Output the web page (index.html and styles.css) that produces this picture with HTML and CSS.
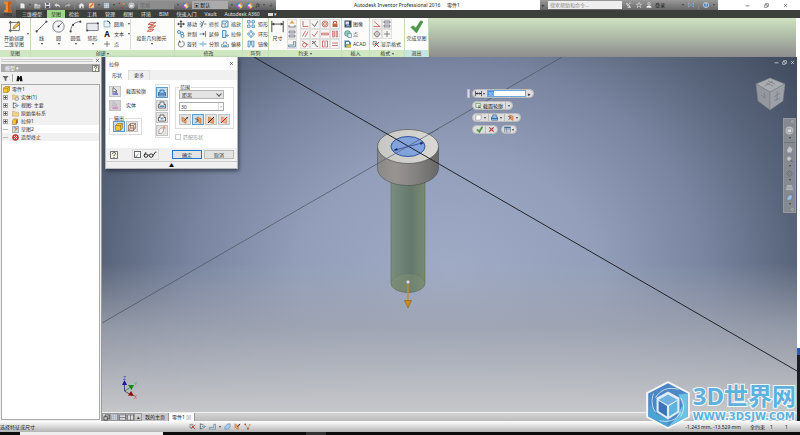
FILE: index.html
```html
<!DOCTYPE html>
<html lang="zh-CN">
<head>
  <meta charset="UTF-8" />
  <title>Autodesk Inventor Professional 2016</title>
  <link rel="stylesheet" href="styles.css">
</head>
<body>

  <!-- icon set, 16 x 16 grid -->
  <svg class="sprite" aria-hidden="true">
    <symbol id="i-new" viewBox="0 0 16 16"><path d="M3 3h7l3 3v8H3z" fill="#eee" stroke="#999"/></symbol>
    <symbol id="i-open" viewBox="0 0 16 16"><path d="M1 4h5l2 2h6v8H1z" fill="#d8d8d8"/><path d="M4 8h12l-3 6H1z" fill="#aaa"/></symbol>
    <symbol id="i-save" viewBox="0 0 16 16"><path d="M2 2h12v12H2z" fill="#dde"/><path d="M5 2h6v4H5zM4 9h8v5H4z" fill="#556"/></symbol>
    <symbol id="i-undo" viewBox="0 0 16 16"><path d="M1 7l5-5v3c6 0 8 3 8 8-2-4-4-4-8-4v3z" fill="#ddd"/></symbol>
    <symbol id="i-redo" viewBox="0 0 16 16"><path d="M15 7l-5-5v3c-6 0-8 3-8 8 2-4 4-4 8-4v3z" fill="#aaa"/></symbol>
    <symbol id="i-home" viewBox="0 0 16 16"><path d="M1 8l7-6 7 6h-2v6H3V8z" fill="#e8e8e8"/><path d="M7 10h3v4H7z" fill="#555"/></symbol>
    <symbol id="i-pencil" viewBox="0 0 16 16"><path d="M2 2h12v12H2z" fill="#f0d8a8" stroke="#a66"/><path d="M4 12l8-8" stroke="#d62" stroke-width="3"/></symbol>
    <symbol id="i-ball" viewBox="0 0 16 16"><circle cx="8" cy="8" r="7" fill="#48c"/><path d="M8 8V1a7 7 0 0 1 7 7z" fill="#e84"/><path d="M8 8h7a7 7 0 0 1-7 7z" fill="#ec4"/><path d="M8 8v7a7 7 0 0 1-7-7z" fill="#b4c"/><circle cx="8" cy="8" r="3" fill="#eee"/></symbol>
    <symbol id="i-grid" viewBox="0 0 16 16"><path d="M2 2h12v12H2z" fill="#e6eef2" stroke="#678"/><path d="M2 6h12M2 10h12M6 2v12M10 2v12" stroke="#89a"/></symbol>
    <symbol id="i-pick" viewBox="0 0 16 16"><path d="M4 1v10l3-3 2 4 2-1-2-3h3z" fill="#fff" stroke="#223" stroke-width="1.2"/><path d="M3 14h11" stroke="#22c" stroke-width="2"/></symbol>
    <symbol id="i-pick-off" viewBox="0 0 16 16"><path d="M4 1v10l3-3 2 4 2-1-2-3h3z" fill="#ccc" stroke="#aaa"/><path d="M3 14h11" stroke="#c6b" stroke-width="2"/></symbol>
    <symbol id="i-sketch" viewBox="0 0 16 16"><path d="M3 1v14M1 3h13v10H1" fill="none" stroke="#555"/><circle cx="3" cy="3" r="1.5" fill="#666"/><circle cx="13" cy="3" r="1.5" fill="#666"/><circle cx="3" cy="13" r="1.5" fill="#666"/><path d="M6 11l1-3 6-5 2 2-6 5z" fill="#eb4" stroke="#754" stroke-width=".7"/></symbol>
    <symbol id="i-line" viewBox="0 0 16 16"><path d="M2 14L14 2" stroke="#555"/><circle cx="2" cy="14" r="1.3" fill="#444"/><circle cx="14" cy="2" r="1.3" fill="#444"/></symbol>
    <symbol id="i-circle" viewBox="0 0 16 16"><circle cx="8" cy="8" r="7" fill="#f2f4f5" stroke="#667"/><path d="M8 8l4-4" stroke="#667"/><circle cx="8" cy="8" r="1.2" fill="#333"/></symbol>
    <symbol id="i-arc" viewBox="0 0 16 16"><path d="M2 14C2 6 8 2 14 2" fill="none" stroke="#555"/><circle cx="2" cy="14" r="1.3" fill="#444"/><circle cx="14" cy="2" r="1.3" fill="#444"/><circle cx="5" cy="6" r="1.3" fill="#444"/></symbol>
    <symbol id="i-rect" viewBox="0 0 16 16"><path d="M1 4h14v9H1z" fill="#e6eaec" stroke="#667"/><circle cx="1.5" cy="13" r="1.3" fill="#444"/><circle cx="14.5" cy="4" r="1.3" fill="#444"/></symbol>
    <symbol id="i-fillet" viewBox="0 0 16 16"><path d="M2 2h6q6 0 6 6v6H2z" fill="#e8f0f6" stroke="#478"/><path d="M8 2q6 0 6 6" fill="none" stroke="#16a" stroke-width="2"/></symbol>
    <symbol id="i-point" viewBox="0 0 16 16"><path d="M8 2v12M2 8h12" stroke="#555" stroke-width="1.4"/></symbol>
    <symbol id="i-project" viewBox="0 0 16 16"><path d="M3 5l4-3h7l-4 3zM3 10l4-3h7l-4 3zM2 15l3-3h6l-3 3z" fill="#fbd8d0" stroke="#b43" stroke-width="1.2"/><path d="M10 5L6 9" stroke="#b43"/></symbol>
    <symbol id="i-move" viewBox="0 0 16 16"><path d="M8 0l3 4H9v3h3V5l4 3-4 3V9H9v3h2l-3 4-3-4h2V9H4v2L0 8l4-3v2h3V4H5z" fill="#444"/></symbol>
    <symbol id="i-copy" viewBox="0 0 16 16"><g fill="#fff" stroke="#27a" stroke-width="1.6"><circle cx="4" cy="4" r="3"/><circle cx="10" cy="7" r="3"/><circle cx="11" cy="12" r="3"/></g></symbol>
    <symbol id="i-rotate" viewBox="0 0 16 16"><path d="M10 2a6 6 0 1 1-5 1" fill="none" stroke="#555" stroke-width="1.6"/><path d="M4 0v5h5z" fill="#555"/></symbol>
    <symbol id="i-trim" viewBox="0 0 16 16"><path d="M1 8h5M10 8h5M10 1L5 15" stroke="#555" stroke-width="1.4"/><path d="M3 3l5 4M3 13l5-4" stroke="#27a" stroke-width="1.8"/></symbol>
    <symbol id="i-extend" viewBox="0 0 16 16"><path d="M1 8h9M13 2v12" stroke="#27a" stroke-width="1.6"/><path d="M8 5l4 3-4 3z" fill="#555"/></symbol>
    <symbol id="i-split" viewBox="0 0 16 16"><path d="M1 8h5M10 8h5M8 3v10" stroke="#27a" stroke-width="1.5"/></symbol>
    <symbol id="i-scale" viewBox="0 0 16 16"><path d="M2 2h12v12H2z" fill="#d6e8f4" stroke="#27a" stroke-width="1.5"/><path d="M2 8h6v6H2zM8 8l4-4" fill="#fff" stroke="#456"/></symbol>
    <symbol id="i-stretch" viewBox="0 0 16 16"><path d="M3 1h7v14H3z" fill="#d6e8f4" stroke="#27a" stroke-width="1.5"/><path d="M8 11h7M12 8l3 3-3 3" fill="none" stroke="#456"/></symbol>
    <symbol id="i-offset" viewBox="0 0 16 16"><path d="M1 14V9l4-1V4h6v4l4 1v5z" fill="#dfe9f0" stroke="#467"/><path d="M4 12h8" stroke="#27a" stroke-width="2"/></symbol>
    <symbol id="i-pat" viewBox="0 0 16 16"><path d="M4 4h8v8H4z" fill="none" stroke="#89a"/><path d="M1 1h5v5H1zM10 1h5v5h-5zM1 10h5v5H1zM10 10h5v5h-5z" fill="#dceaf6" stroke="#27a" stroke-width="1.2"/></symbol>
    <symbol id="i-ring" viewBox="0 0 16 16"><circle cx="8" cy="8" r="5" fill="none" stroke="#89a"/><g fill="#dceaf6" stroke="#27a" stroke-width="1.2"><circle cx="8" cy="3" r="2"/><circle cx="3" cy="8" r="2"/><circle cx="13" cy="8" r="2"/><circle cx="8" cy="13" r="2"/></g></symbol>
    <symbol id="i-mirror" viewBox="0 0 16 16"><path d="M2 2v12h3l2-6V2zM14 2v12h-3L9 8V2z" fill="#cde" stroke="#27a" stroke-width="1.2"/></symbol>
    <symbol id="i-dim" viewBox="0 0 16 16"><path d="M1 1v14M15 1v14M1 5h14" stroke="#444" stroke-width="1.2"/><path d="M1 5l3-2v4zM15 5l-3-2v4z" fill="#444"/></symbol>
    <symbol id="i-span" viewBox="0 0 16 16"><path d="M1 2v12M15 2v12M1 8h14" stroke="#223" stroke-width="1.6"/><path d="M2 8l4-3v6zM14 8l-4-3v6z" fill="#223"/></symbol>
    <symbol id="i-auto" viewBox="0 0 16 16"><path d="M1 14h14M2 10v4M14 10v4" stroke="#555" stroke-width="1.4"/><path d="M8 1l5 6H3z" fill="#e8a03a"/></symbol>
    <symbol id="i-stack" viewBox="0 0 16 16"><path d="M2 2h12v4H2zM2 10h12v4H2z" fill="#dde" stroke="#556" stroke-width="1.3"/></symbol>
    <symbol id="i-rows" viewBox="0 0 16 16"><path d="M1 2h14v12H1zM1 8h14" fill="#ddd" stroke="#556" stroke-width="1.5"/></symbol>
    <symbol id="i-columns" viewBox="0 0 16 16"><path d="M1 2h14v12H1zM8 2v12" fill="#ddd" stroke="#556" stroke-width="1.5"/></symbol>
    <symbol id="i-steps" viewBox="0 0 16 16"><path d="M1 14h14V3h-4v7H1z" fill="#cde" stroke="#467" stroke-width="1.2"/></symbol>
    <symbol id="c-perp" viewBox="0 0 16 16"><path d="M4 2v11h11" class="red"/></symbol>
    <symbol id="c-coin" viewBox="0 0 16 16"><path d="M2 7l5 6 7-11" class="dark"/></symbol>
    <symbol id="c-conc" viewBox="0 0 16 16"><circle cx="8" cy="8" r="6" class="red"/><circle cx="8" cy="8" r="3" class="red"/></symbol>
    <symbol id="c-lock" viewBox="0 0 16 16"><path d="M3 7h10v7H3z" fill="#b86a3a"/><path d="M5 7V3h6v4" fill="none" stroke="#a54" stroke-width="2"/></symbol>
    <symbol id="c-para" viewBox="0 0 16 16"><path d="M3 13l6-11M8 14l6-11" class="red"/></symbol>
    <symbol id="c-tan" viewBox="0 0 16 16"><path d="M2 8l4 5 8-11" class="red"/></symbol>
    <symbol id="c-hor" viewBox="0 0 16 16"><path d="M1 6h14v4H1z" fill="#e6b4b0" stroke="#b55"/></symbol>
    <symbol id="c-ver" viewBox="0 0 16 16"><path d="M3 2h4v12H3zM10 2h3v12h-3z" fill="#e6b4b0" stroke="#b55"/></symbol>
    <symbol id="c-tang" viewBox="0 0 16 16"><circle cx="7" cy="10" r="4" class="red"/><path d="M2 2l13 8" class="red"/></symbol>
    <symbol id="c-smooth" viewBox="0 0 16 16"><path d="M2 3c8 0 4 10 12 10M2 8l8-6" class="dark"/></symbol>
    <symbol id="c-sym" viewBox="0 0 16 16"><path d="M6 2H3v12h3M10 2h3v12h-3M8 1v14" class="red"/></symbol>
    <symbol id="c-eq" viewBox="0 0 16 16"><path d="M2 6h12M2 11h12" class="red"/></symbol>
    <symbol id="i-image" viewBox="0 0 16 16"><path d="M1 1h14v14H1z" fill="#345"/><path d="M3 3h7v6H3z" fill="#dde"/><path d="M3 13l5-6 5 6z" fill="#8ac"/></symbol>
    <symbol id="i-globe" viewBox="0 0 16 16"><circle cx="7" cy="7" r="6" fill="#8cc4b8" stroke="#377"/><path d="M8 7h7v8H8z" fill="#ddeef4" stroke="#467"/></symbol>
    <symbol id="i-acad" viewBox="0 0 16 16"><path d="M1 1h9l4 4v10H1z" fill="#4a7e9e"/><path d="M4 4h6v4H4z" fill="#fff"/><path d="M5 9h9v6H5z" fill="#e0c040"/></symbol>
    <symbol id="i-center" viewBox="0 0 16 16"><circle cx="8" cy="8" r="5" fill="none" stroke="#555" stroke-width="1.4"/><path d="M0 8h16M8 0v16" stroke="#888"/></symbol>
    <symbol id="i-constr" viewBox="0 0 16 16"><path d="M2 3l11 9M1 13h14" class="red"/></symbol>
    <symbol id="i-fmt" viewBox="0 0 16 16"><path d="M2 3h7v7H2z" fill="#ddd" stroke="#445"/><path d="M5 13l9-9M6 6l8 8" stroke="#b33" stroke-width="2"/></symbol>
    <symbol id="i-check" viewBox="0 0 16 16"><path d="M1 9l3-2 3 3 6-9 3 1-8 14z" fill="#4d9a4a" stroke="#357a36" stroke-width=".6"/></symbol>
    <symbol id="i-cross" viewBox="0 0 16 16"><path d="M3 3l10 10M13 3L3 13" stroke="#b5353a" stroke-width="2.6"/></symbol>
    <symbol id="i-close" viewBox="0 0 16 16"><path d="M3 3l10 10M13 3L3 13" stroke="currentColor" stroke-width="1.8"/></symbol>
    <symbol id="i-min" viewBox="0 0 16 16"><path d="M2 9h12" stroke="currentColor" stroke-width="2"/></symbol>
    <symbol id="i-max" viewBox="0 0 16 16"><path d="M2 6h8v8H2zM5 6V2h9v9h-4" fill="none" stroke="currentColor" stroke-width="1.6"/></symbol>
    <symbol id="i-cube" viewBox="0 0 16 16"><path d="M1 5l4-4h10v9l-4 5H1z" fill="#f5c530" stroke="#7a5a10"/><path d="M1 5h10v10M11 5l4-4" fill="none" stroke="#7a5a10"/></symbol>
    <symbol id="i-surf" viewBox="0 0 16 16"><path d="M1 5l4-4h10v9l-4 5H1zM1 5h10v10M11 5l4-4M5 1v9h10M5 10l-4 5" fill="#ecd8c8" stroke="#6a3f2a"/></symbol>
    <symbol id="i-slice" viewBox="0 0 16 16"><path d="M2 9l6-7h6v6l-4 6H2z" fill="#a9cbee" stroke="#3a6ea8"/></symbol>
    <symbol id="i-folder" viewBox="0 0 16 16"><path d="M1 3h5l2 2h7v9H1z" fill="#f0d28c" stroke="#b9925a"/></symbol>
    <symbol id="i-solids" viewBox="0 0 16 16"><path d="M1 2h5l2 2h6v8H1z" fill="#f0d28c" stroke="#b9925a"/><circle cx="11" cy="11" r="4" fill="#d8dce2" stroke="#667"/></symbol>
    <symbol id="i-view" viewBox="0 0 16 16"><path d="M3 1v13M3 3h7M3 13h5" class="dark"/><path d="M7 8l4-2 4 2-4 3z" fill="#9bc8ea" stroke="#258"/></symbol>
    <symbol id="i-extr" viewBox="0 0 16 16"><path d="M1 6l3-4h8v8l-3 5H1z" fill="#f0c33a" stroke="#853"/><path d="M9 6v9l4-4V2z" fill="#b4622a"/></symbol>
    <symbol id="i-sk2" viewBox="0 0 16 16"><path d="M1 1h14v14H1z" fill="#d7dde6" stroke="#557"/><path d="M4 12l8-9 2 2-7 8z" fill="#e8a030"/><path d="M4 4h5v4" fill="none" stroke="#335"/></symbol>
    <symbol id="i-stop" viewBox="0 0 16 16"><circle cx="8" cy="8" r="7" fill="#d8383a" stroke="#922"/><path d="M5 5l6 6M11 5l-6 6" stroke="#fff" stroke-width="2.2"/></symbol>
    <symbol id="i-filter" viewBox="0 0 16 16"><path d="M1 2h14l-5 6v6l-4-2V8z" fill="#667"/></symbol>
    <symbol id="i-bino" viewBox="0 0 16 16"><path d="M3 2h4v3h2V2h4l2 12H9v-4H7v4H1z" fill="#111"/></symbol>
    <symbol id="i-help" viewBox="0 0 16 16"><path d="M1 1h14v14H1z" fill="#f4f4e4" stroke="#555" stroke-width="1.6"/><path d="M5 6c0-4 6-4 6-1 0 2-3 2-3 5M8 12v2" fill="none" stroke="#333" stroke-width="1.8"/></symbol>
    <symbol id="i-join" viewBox="0 0 16 16"><path d="M4 7V2h8v5h3v7H1V7z" fill="#9cc2ea" stroke="#23578a" stroke-width="1.4"/><path d="M1 10h14" stroke="#23578a" stroke-width="2"/></symbol>
    <symbol id="i-cut" viewBox="0 0 16 16"><path d="M4 7V2h8v5h3v7H1V7z" fill="#eee" stroke="#345" stroke-width="1.4"/><path d="M3 9h10v3H3z" fill="#58a"/></symbol>
    <symbol id="i-inter" viewBox="0 0 16 16"><path d="M4 7V2h8v5h3v7H1V7z" fill="#fff" stroke="#333" stroke-width="1.4"/><path d="M5 7h6v4H5z" fill="#79b"/></symbol>
    <symbol id="i-newbody" viewBox="0 0 16 16"><path d="M2 8l4-4h5v6l-4 5H2z" fill="#f4f4f4" stroke="#766"/><circle cx="12" cy="3" r="3" fill="#e8a07a"/></symbol>
    <symbol id="i-dir" viewBox="0 0 16 16"><path d="M2 2l8 5v8l-8-5z" fill="#f0a060" stroke="#b25a20"/><path d="M7 9l7-7" stroke="#333" stroke-width="1.6"/><path d="M14 2l-4 1 3 3z" fill="#333"/></symbol>
    <symbol id="i-dir2" viewBox="0 0 16 16"><path d="M6 2l8 3v10l-8-5z" fill="#f0a060" stroke="#b25a20"/><path d="M2 5l7 3M9 8L3 14" stroke="#345" stroke-width="1.5"/></symbol>
    <symbol id="i-dir3" viewBox="0 0 16 16"><path d="M3 2l10 4v9L3 11z" fill="#f0a060" stroke="#b25a20"/><path d="M2 14L14 2" stroke="#222" stroke-width="2"/></symbol>
    <symbol id="i-dir4" viewBox="0 0 16 16"><path d="M3 2l10 4v9L3 11z" fill="#f3b48c" stroke="#c86a40"/><path d="M2 14L14 2" stroke="#c22" stroke-width="2"/></symbol>
    <symbol id="i-glasses" viewBox="0 0 24 12"><g fill="none" stroke="#222" stroke-width="1.6"><circle cx="5" cy="8" r="3"/><circle cx="14" cy="8" r="3"/><path d="M8 7h3M2 8l3-6M17 8l4-6h2"/></g></symbol>
    <symbol id="i-box" viewBox="0 0 16 16"><path d="M2 4l3-2h9v9l-3 3H2z" fill="#fff" stroke="#667"/></symbol>
    <symbol id="i-list" viewBox="0 0 16 16"><path d="M1 2h14v12H1z" fill="#fff" stroke="#457"/><path d="M1 4h14" stroke="#37a" stroke-width="3"/><path d="M1 8h14M1 11h14M6 3v11" stroke="#457"/></symbol>
    <symbol id="i-profile" viewBox="0 0 16 16"><path d="M2 3h10v9H2z" fill="#eaf5e6" stroke="#497a40" stroke-width="1.4"/><path d="M9 7v7l2-2 3 3" fill="none" stroke="#222" stroke-width="1.3"/></symbol>
    <symbol id="i-sat" viewBox="0 0 16 16"><path d="M2 3l9 9M2 3c0 6 3 9 9 9M7 7l5-5M4 15h9" fill="none" stroke="#eee" stroke-width="2"/></symbol>
    <symbol id="i-star" viewBox="0 0 16 16"><path d="M8 1l2 5h5l-4 3 2 6-5-4-5 4 2-6-4-3h5z" fill="none" stroke="#eee" stroke-width="1.4"/></symbol>
    <symbol id="i-user" viewBox="0 0 16 16"><circle cx="8" cy="5" r="3.5" fill="none" stroke="#eee" stroke-width="1.6"/><path d="M1 15c0-8 14-8 14 0z" fill="#eee"/></symbol>
    <symbol id="i-x" viewBox="0 0 16 16"><path d="M1 2l6 6-6 6zM15 2L9 8l6 6z" fill="#3f78b4" stroke="#ddd"/></symbol>
    <symbol id="i-q" viewBox="0 0 16 16"><circle cx="8" cy="8" r="7" fill="#4f86b8" stroke="#eee" stroke-width="1.5"/><path d="M6 6c0-3 5-3 4 0-1 1-2 1-2 4M8 11v2" fill="none" stroke="#fff" stroke-width="1.6"/></symbol>
    <symbol id="i-hand" viewBox="0 0 16 16"><path d="M4 15L2 8l2-1 1 2V3h2v4V1h2v6l1-5h2v6l1-3h2l-3 10z" fill="#d6d8dc"/></symbol>
    <symbol id="i-zoom" viewBox="0 0 16 16"><circle cx="7" cy="6" r="4" fill="#ddd" stroke="#c4c6ca" stroke-width="2"/><path d="M10 9l5 5" stroke="#444" stroke-width="2"/></symbol>
    <symbol id="i-orbit" viewBox="0 0 16 16"><path d="M8 1l7 7-7 7-7-7z" fill="none" stroke="#62666d" stroke-width="1.6"/><circle cx="8" cy="8" r="3" fill="none" stroke="#62666d"/></symbol>
    <symbol id="i-look" viewBox="0 0 16 16"><path d="M4 3h8l3 6v4H1V9z" fill="#b9bcc1" stroke="#dcdde0"/><path d="M1 9h14" stroke="#777"/></symbol>
    <symbol id="i-wheel" viewBox="0 0 16 16"><circle cx="8" cy="8" r="7" fill="#c9cbcf"/><path d="M4 5h6l2 2v5H6L4 10z" fill="#eee" stroke="#777"/></symbol>
    <symbol id="i-axis" viewBox="0 0 16 16"><path d="M3 3l6 10L14 3" fill="none" stroke="#777"/><circle cx="3" cy="3" r="2" fill="#c33"/><circle cx="9" cy="13" r="2" fill="#c33"/><circle cx="13" cy="4" r="2" fill="#e93"/></symbol>
  </svg>

  <header class="top">
    <button class="app-btn" aria-label="Inventor">
      <svg viewBox="0 0 16 16"><path d="M3 1h10v3h-2v8h2v3H3v-3h2V4H3z" fill="#f08a28"/><path d="M8 1h5v3h-2v8h2v3H8z" fill="#c85a14"/></svg>
      <small>PRO</small>
    </button>
    <div class="top-rows">
      <div class="titlebar">
        <div class="quick">
          <button aria-label="新建"><svg class="ic"><use href="#i-new"/></svg></button><span class="tri"></span>
          <button aria-label="打开"><svg class="ic"><use href="#i-open"/></svg></button>
          <button aria-label="保存"><svg class="ic"><use href="#i-save"/></svg></button>
          <button aria-label="撤消"><svg class="ic"><use href="#i-undo"/></svg></button>
          <button aria-label="重做"><svg class="ic"><use href="#i-redo"/></svg></button>
          <i class="sep"></i>
          <button aria-label="主页"><svg class="ic"><use href="#i-home"/></svg></button>
          <button aria-label="草图"><svg class="ic"><use href="#i-pencil"/></svg></button><span class="tri"></span>
          <button aria-label="更新"><svg class="ic"><use href="#i-grid"/></svg></button><span class="tri"></span>
          <button aria-label="选择"><svg class="ic"><use href="#i-axis"/></svg></button>
          <button aria-label="材料"><svg class="ic"><use href="#i-wheel"/></svg></button>
          <select class="material" aria-label="材料"><option>常规</option></select>
          <span class="tri"></span>
          <button aria-label="外观"><svg class="ic"><use href="#i-ball"/></svg></button>
          <select class="look" aria-label="外观"><option>▣ 默认</option></select>
          <span class="tri"></span>
          <button aria-label="调整"><svg class="ic"><use href="#i-ball"/></svg></button>
          <button aria-label="清除"><svg class="ic"><use href="#i-ball"/></svg></button>
          <em>fx</em><span class="tri"></span><em>＋</em>
        </div>
        <div class="title">Autodesk Inventor Professional 2016 &nbsp; &nbsp; 零件1</div>
        <div class="search">
          <span>▸</span>
          <input type="text" aria-label="搜索" placeholder="搜索帮助和命令...">
          <button aria-label="搜索"><svg class="ic"><use href="#i-sat"/></svg></button>
          <button aria-label="收藏"><svg class="ic"><use href="#i-star"/></svg></button>
          <button class="login"><svg class="ic"><use href="#i-user"/></svg>登录</button>
          <span class="tri"></span>
          <button aria-label="Exchange"><svg class="ic"><use href="#i-x"/></svg></button>
          <i class="sep"></i>
          <button aria-label="帮助"><svg class="ic"><use href="#i-q"/></svg></button>
          <span class="tri"></span>
        </div>
        <div class="win">
          <button aria-label="最小化"><svg class="ic s5"><use href="#i-min"/></svg></button>
          <button aria-label="还原"><svg class="ic s5"><use href="#i-max"/></svg></button>
          <button aria-label="关闭"><svg class="ic s5"><use href="#i-close"/></svg></button>
        </div>
      </div>
      <nav class="tabs">
        <a href="#">三维模型</a><a href="#" class="active">草图</a><a href="#">检验</a><a href="#">工具</a><a href="#">管理</a><a href="#">视图</a><a href="#">环境</a><a href="#">BIM</a><a href="#">快速入门</a><a href="#">Vault</a><a href="#">Autodesk A360</a><a href="#" aria-label="显示"><span class="chip"></span> ▾</a>
      </nav>
    </div>
  </header>

  <section class="ribbon">
    <div class="panel p-sketch">
      <div class="tools">
        <button class="big"><svg class="ic l"><use href="#i-sketch"/></svg>开始创建<br>二维草图</button><span class="tri"></span>
      </div>
      <h2>草图</h2>
    </div>
    <div class="panel p-create">
      <div class="tools">
        <button class="big"><svg class="ic l"><use href="#i-line"/></svg>线<span class="tri"></span></button>
        <button class="big"><svg class="ic l"><use href="#i-circle"/></svg>圆<span class="tri"></span></button>
        <button class="big"><svg class="ic l"><use href="#i-arc"/></svg>圆弧<span class="tri"></span></button>
        <button class="big"><svg class="ic l"><use href="#i-rect"/></svg>矩形<span class="tri"></span></button>
        <div class="small-col">
          <button><svg class="ic"><use href="#i-fillet"/></svg>圆角 <span class="tri"></span></button>
          <button><b class="letter">A</b>文本 <span class="tri"></span></button>
          <button><svg class="ic"><use href="#i-point"/></svg>点</button>
        </div>
        <button class="big project"><svg class="ic l"><use href="#i-project"/></svg>投影几何图元<span class="tri"></span></button>
      </div>
      <h2>创建 <span class="tri"></span></h2>
    </div>
    <div class="panel p-modify">
      <div class="tools cols">
        <button><svg class="ic"><use href="#i-move"/></svg>移动</button>
        <button><svg class="ic"><use href="#i-trim"/></svg>修剪</button>
        <button><svg class="ic"><use href="#i-scale"/></svg>缩放</button>
        <button><svg class="ic"><use href="#i-copy"/></svg>复制</button>
        <button><svg class="ic"><use href="#i-extend"/></svg>延伸</button>
        <button><svg class="ic"><use href="#i-stretch"/></svg>拉伸</button>
        <button><svg class="ic"><use href="#i-rotate"/></svg>旋转</button>
        <button><svg class="ic"><use href="#i-split"/></svg>分割</button>
        <button><svg class="ic"><use href="#i-offset"/></svg>偏移</button>
      </div>
      <h2>修改</h2>
    </div>
    <div class="panel p-pattern">
      <div class="tools">
        <div class="small-col">
          <button><svg class="ic"><use href="#i-pat"/></svg>矩形</button>
          <button><svg class="ic"><use href="#i-ring"/></svg>环形</button>
          <button><svg class="ic"><use href="#i-mirror"/></svg>镜像</button>
        </div>
      </div>
      <h2>阵列</h2>
    </div>
    <div class="panel p-constrain">
      <div class="tools">
        <button class="big"><svg class="ic l"><use href="#i-dim"/></svg>尺寸</button>
        <div class="small-col boxed">
          <button aria-label="自动"><svg class="ic"><use href="#i-auto"/></svg></button>
          <button aria-label="显示约束"><svg class="ic"><use href="#i-stack"/></svg></button>
          <button aria-label="设置"><svg class="ic"><use href="#i-steps"/></svg></button>
        </div>
        <div class="quad boxed">
          <button aria-label="垂直"><svg class="ic"><use href="#c-perp"/></svg></button>
          <button aria-label="重合"><svg class="ic"><use href="#c-coin"/></svg></button>
          <button aria-label="同心"><svg class="ic"><use href="#c-conc"/></svg></button>
          <button aria-label="固定"><svg class="ic"><use href="#c-lock"/></svg></button>
          <button aria-label="平行"><svg class="ic"><use href="#c-para"/></svg></button>
          <button aria-label="共线"><svg class="ic"><use href="#c-tan"/></svg></button>
          <button aria-label="水平"><svg class="ic"><use href="#c-hor"/></svg></button>
          <button aria-label="竖直"><svg class="ic"><use href="#c-ver"/></svg></button>
          <button aria-label="相切"><svg class="ic"><use href="#c-tang"/></svg></button>
          <button aria-label="平滑"><svg class="ic"><use href="#c-smooth"/></svg></button>
          <button aria-label="对称"><svg class="ic"><use href="#c-sym"/></svg></button>
          <button aria-label="相等"><svg class="ic"><use href="#c-eq"/></svg></button>
        </div>
      </div>
      <h2>约束 <span class="tri"></span></h2>
    </div>
    <div class="panel p-insert">
      <div class="tools">
        <div class="small-col">
          <button><svg class="ic"><use href="#i-image"/></svg>图像</button>
          <button><svg class="ic"><use href="#i-globe"/></svg>点</button>
          <button><svg class="ic"><use href="#i-acad"/></svg>ACAD</button>
        </div>
      </div>
      <h2>插入</h2>
    </div>
    <div class="panel p-format">
      <div class="tools">
        <div class="small-col">
          <div class="boxed pair">
            <button aria-label="构造"><svg class="ic"><use href="#i-constr"/></svg></button>
            <button aria-label="联动尺寸"><svg class="ic"><use href="#i-stack"/></svg></button>
          </div>
          <div class="boxed pair">
            <button aria-label="中心线"><svg class="ic"><use href="#i-center"/></svg></button>
            <button aria-label="中心点"><svg class="ic"><use href="#i-point"/></svg></button>
          </div>
          <button><svg class="ic"><use href="#i-fmt"/></svg>显示格式</button>
        </div>
      </div>
      <h2>格式 <span class="tri"></span></h2>
    </div>
    <div class="panel p-exit">
      <div class="tools">
        <button class="big"><svg class="ic l"><use href="#i-check"/></svg>完成草图</button>
      </div>
      <h2>退出</h2>
    </div>
  </section>

  <main>
    <aside class="browser">
      <div class="grip"><i></i><button aria-label="关闭"><svg class="ic s5"><use href="#i-close"/></svg></button></div>
      <div class="browser-head"><span>模型 ▾</span><svg class="ic s7"><use href="#i-help"/></svg></div>
      <div class="browser-tools">
        <button aria-label="过滤"><svg class="ic s7"><use href="#i-filter"/></svg></button>
        <i></i>
        <button aria-label="查找"><svg class="ic s7"><use href="#i-bino"/></svg></button>
      </div>
      <ul class="tree">
        <li class="root shade"><svg class="ic"><use href="#i-cube"/></svg>零件1</li>
        <li class="shade"><span class="plus"></span><svg class="ic"><use href="#i-solids"/></svg>实体(1)</li>
        <li class="shade"><span class="plus"></span><svg class="ic"><use href="#i-view"/></svg>视图: 主要</li>
        <li class="shade"><span class="plus"></span><svg class="ic"><use href="#i-folder"/></svg>原始坐标系</li>
        <li class="shade"><span class="plus"></span><svg class="ic"><use href="#i-extr"/></svg>拉伸1</li>
        <li><span class="dash"></span><svg class="ic"><use href="#i-sk2"/></svg>草图2</li>
        <li class="shade"><span class="dash"></span><svg class="ic"><use href="#i-stop"/></svg>造型终止</li>
      </ul>
    </aside>

    <div class="work">
      <div class="canvas">
        <svg class="scene" viewBox="102 57 695 355" preserveAspectRatio="none">
          <defs>
            <linearGradient id="head" x1="0" x2="1"><stop offset="0" stop-color="#8a8988"/><stop offset=".3" stop-color="#989492"/><stop offset=".6" stop-color="#858483"/><stop offset="1" stop-color="#676867"/></linearGradient>
            <linearGradient id="shaft" x1="0" x2="1"><stop offset="0" stop-color="#7b8e80"/><stop offset=".15" stop-color="#74877b"/><stop offset=".6" stop-color="#67796d"/><stop offset="1" stop-color="#788a72"/></linearGradient>
            <linearGradient id="face" x1="0" x2="1"><stop offset="0" stop-color="#c6c7c4"/><stop offset="1" stop-color="#dad9d4"/></linearGradient>
          </defs>
          <path d="M102 323L562 57" stroke="#4a5160" stroke-width=".7"/>
          <path d="M391 170V283a17 9.5 0 0 0 34 0V170z" fill="url(#shaft)" stroke="#5b7055" stroke-width=".6"/>
          <ellipse cx="408" cy="283" rx="17" ry="9.5" fill="#7d8f74" fill-opacity=".5" stroke="#66775f" stroke-width=".4"/>
          <path d="M377.500 147V168.500a30.500 17 0 0 0 61 0V147z" fill="url(#head)" stroke="#444" stroke-width=".5"/>
          <ellipse cx="408" cy="146.500" rx="30.500" ry="17" fill="url(#face)" stroke="#444" stroke-width=".6"/>
          <ellipse cx="408" cy="146.500" rx="17" ry="10" fill="#82a2dc" stroke="#234a94" stroke-width=".9"/>
          <path d="M377 164L439 128.500" stroke="#4a5160" stroke-width=".6"/>
          <path d="M254 57L797 371" stroke="#22242a" stroke-width="1"/>
          <path d="M395 150L422 143" stroke="#223c80" stroke-width=".7"/>
          <path d="M393 150.500l4-2.500.7 2.600zM424 142.500l-4-.2.8 2.600z" fill="#112866"/>
          <path d="M408 284v17" stroke="#c98a26" stroke-width="1.300"/>
          <path d="M404.500 300.500h7L408 308z" fill="#cf8a1c" stroke="#7d5312" stroke-width=".5"/>
          <circle cx="408" cy="282" r="1.800" fill="#d8dcdc" stroke="#888" stroke-width=".4"/>
          <g stroke-width=".8">
            <path d="M124.500 391v-7" stroke="#2a2a80"/><path d="M122 385h5l-2.500-5z" fill="#1818a0"/>
            <path d="M124.500 391l5-3" stroke="#287028"/><path d="M128 385l6 0-2.500 5z" fill="#128a18"/>
            <path d="M124.500 391l5 3" stroke="#802020"/><path d="M131 391l3 5-6-.5z" fill="#900c0c"/>
          </g>
          <text x="123" y="380" class="axis" fill="#3a3ad8">Z</text>
          <text x="134" y="386" class="axis" fill="#3fb84a">Y</text>
          <text x="134" y="399" class="axis" fill="#d83a3a">X</text>
          <!-- view cube -->
          <g stroke="#7b7f86" stroke-width=".5">
            <path d="M756 84l14-6 15 6-15 8z" fill="#a9acb1"/>
            <path d="M756 84l14 8v18l-12-9z" fill="#94979d"/>
            <path d="M785 84l-15 8v18l13-9z" fill="#9da0a6"/>
            <path d="M766 83l7 3M768 81l7 3M765 86l8-5M761 95l4 3-1-5M774 97l6-4M777 91v9M774 101l6-3" stroke="#666a72" fill="none"/>
          </g>
        </svg>

        <div class="doc-win">
          <button aria-label="最小化"><svg class="ic s5"><use href="#i-min"/></svg></button>
          <button aria-label="还原"><svg class="ic s5"><use href="#i-max"/></svg></button>
          <button aria-label="关闭"><svg class="ic s5"><use href="#i-close"/></svg></button>
        </div>

        <div class="navbar">
          <span class="dot"></span>
          <button aria-label="全导航"><svg class="ic l9"><use href="#i-wheel"/></svg></button><span class="tri"></span>
          <button aria-label="平移" class="line"><svg class="ic"><use href="#i-hand"/></svg></button>
          <button aria-label="缩放"><svg class="ic"><use href="#i-zoom"/></svg></button><span class="tri"></span>
          <button aria-label="动态观察"><svg class="ic"><use href="#i-orbit"/></svg></button><span class="tri"></span>
          <button aria-label="观察方向"><svg class="ic"><use href="#i-look"/></svg></button>
          <button aria-label="选择"><svg class="ic"><use href="#i-slice"/></svg></button><span class="tri"></span>
          <span class="dot"></span>
        </div>

        <form class="mini">
          <div class="mini-row first">
            <span class="handle"></span>
            <div class="pill"><button type="button" aria-label="距离"><svg class="ic"><use href="#i-span"/></svg><span class="tri"></span></button><input type="text" aria-label="距离" value="30"><button type="button" aria-label="更多">▸</button></div>
          </div>
          <div class="mini-row"><div class="pill"><button type="button"><svg class="ic"><use href="#i-profile"/></svg>截面轮廓</button><button type="button" aria-label="更多"><span class="tri"></span></button></div></div>
          <div class="mini-row"><div class="pill wide">
            <button type="button" aria-label="输出"><svg class="ic"><use href="#i-box"/></svg><span class="tri"></span></button>
            <button type="button" aria-label="求并"><svg class="ic"><use href="#i-join"/></svg><span class="tri"></span></button>
            <button type="button" aria-label="方向"><svg class="ic"><use href="#i-dir2"/></svg><span class="tri"></span></button>
          </div></div>
          <div class="mini-row">
            <div class="pill"><button type="button" class="ok" aria-label="确定"><svg class="ic s7"><use href="#i-check"/></svg></button><button type="button" class="ok" aria-label="取消"><svg class="ic s7"><use href="#i-cross"/></svg></button></div>
            <div class="pill"><button type="button" aria-label="选项"><svg class="ic"><use href="#i-list"/></svg><span class="tri"></span></button></div>
          </div>
        </form>

        <form class="dialog">
          <div class="dialog-title">拉伸<button type="button" aria-label="关闭"><svg class="ic s5"><use href="#i-close"/></svg></button></div>
          <div class="dialog-tabs"><a href="#" class="on">形状</a><a href="#">更多</a></div>
          <div class="dialog-body">
            <div class="col-a">
              <div class="field"><button type="button" class="sq" aria-label="选择截面"><svg class="ic"><use href="#i-pick"/></svg></button>截面轮廓</div>
              <div class="field"><button type="button" class="sq off" aria-label="选择实体"><svg class="ic"><use href="#i-pick-off"/></svg></button>实体</div>
              <fieldset class="out">
                <legend>输出</legend>
                <button type="button" class="sq sel" aria-label="实体"><svg class="ic"><use href="#i-cube"/></svg></button>
                <button type="button" class="sq" aria-label="曲面"><svg class="ic"><use href="#i-surf"/></svg></button>
              </fieldset>
            </div>
            <div class="col-b">
              <button type="button" class="sq sel" aria-label="求并"><svg class="ic"><use href="#i-join"/></svg></button>
              <button type="button" class="sq" aria-label="求差"><svg class="ic"><use href="#i-cut"/></svg></button>
              <button type="button" class="sq" aria-label="求交"><svg class="ic"><use href="#i-inter"/></svg></button>
              <button type="button" class="sq" aria-label="新建实体"><svg class="ic"><use href="#i-newbody"/></svg></button>
            </div>
            <div class="col-c">
              <fieldset>
                <legend>范围</legend>
                <div class="drop"><select aria-label="范围"><option>距离</option></select></div>
                <div class="num"><input type="text" aria-label="距离" value="30"><span>›</span></div>
                <div class="dirs">
                  <button type="button" class="sq" aria-label="方向 1"><svg class="ic"><use href="#i-dir"/></svg></button>
                  <button type="button" class="sq sel" aria-label="方向 2"><svg class="ic"><use href="#i-dir2"/></svg></button>
                  <button type="button" class="sq" aria-label="对称"><svg class="ic"><use href="#i-dir3"/></svg></button>
                  <button type="button" class="sq" aria-label="不对称"><svg class="ic"><use href="#i-dir4"/></svg></button>
                </div>
              </fieldset>
              <label class="match"><input type="checkbox" disabled>匹配形状</label>
            </div>
          </div>
          <div class="dialog-foot">
            <button type="button" class="help" aria-label="帮助"><svg class="ic"><use href="#i-help"/></svg></button>
            <label class="preview"><input type="checkbox" aria-label="预览" checked><svg class="glasses"><use href="#i-glasses"/></svg></label>
            <button type="button" class="act main">确定</button>
            <button type="button" class="act">取消</button>
          </div>
          <div class="dialog-fold">▲</div>
        </form>
      </div>

      <div class="docs">
        <button aria-label="层叠"><svg class="ic s7"><use href="#i-max"/></svg></button>
        <button aria-label="平铺"><svg class="ic s7"><use href="#i-grid"/></svg></button>
        <button aria-label="水平"><svg class="ic s7"><use href="#i-rows"/></svg></button>
        <button aria-label="垂直"><svg class="ic s7"><use href="#i-columns"/></svg></button>
        <button aria-label="列表">▴</button>
        <a href="#">我的主页</a><a href="#" class="on">零件1 <span>⊠</span></a>
      </div>
    </div>
    <div class="edge"></div>
  </main>

  <footer>
    <div class="status">
      <span class="hint">选择特征或尺寸</span>
      <div class="status-tools">
        <button aria-label="捕捉"><svg class="ic"><use href="#i-fmt"/></svg></button>
        <button aria-label="显示"><svg class="ic"><use href="#i-view"/></svg></button>
        <button aria-label="尺寸"><svg class="ic"><use href="#i-steps"/></svg></button><span class="tri"></span>
        <button aria-label="切片"><svg class="ic"><use href="#i-slice"/></svg></button>
        <button aria-label="自由度"><svg class="ic"><use href="#i-dir"/></svg></button>
        <button aria-label="约束"><svg class="ic"><use href="#i-axis"/></svg></button>
      </div>
      <span class="coords">-1.243 mm, -13.529 mm</span>
      <span class="full">全约束</span><span class="n">1</span><span class="n">1</span>
    </div>
    <div class="taskbar"><i></i><b></b></div>
  </footer>

  <div class="watermark">
    <svg viewBox="0 0 44 48">
      <path d="M22 1L43 12v24L22 47 1 36V12z" fill="#fff" fill-opacity=".85"/>
      <path d="M22 3L41 13v22L22 45 3 35V13z" fill="#4c86c4"/>
      <path d="M41 13v22L22 45l8-9 6-12-4-10z" fill="#6cc3e4"/>
      <path d="M22 45L3 35l2-12 6 10 12 4z" fill="#4aa3d2"/>
      <path d="M22 11l11 6v14l-11 7-11-7V17z" fill="#dfedf7"/>
      <path d="M22 14l9 5-9 5-9-5z" fill="#6fb0e0"/><path d="M13 20l8 5v10l-8-5z" fill="#3b74b8"/><path d="M31 20l-8 5v10l8-5z" fill="#5fb4de"/>
      <path d="M10 17C14 10 22 6 32 9M34 31c-4 8-12 10-20 8M34 17c4 6 4 12 0 18M10 31C6 25 6 19 8 13" fill="none" stroke="#d9ecf8" stroke-width=".8"/>
    </svg>
    <div><strong>3D世界网</strong><small>WWW.3DSJW.COM</small></div>
  </div>

</body>
</html>
```
FILE: styles.css
```css
* {
  box-sizing: border-box;
}

body {
  margin: 0;
  height: 100vh;
  display: flex;
  flex-direction: column;
  overflow: hidden;
  position: relative;
  background: #f0f0f0;
  color: #333;
  font: 5px/6px "Noto Sans", "Noto Sans CJK SC", sans-serif;
}

button, input, select {
  font: inherit;
  color: inherit;
  margin: 0;
  padding: 0;
  border: 0;
  background: none;
}

button {
  display: inline-flex;
  align-items: center;
  justify-content: center;
  white-space: nowrap;
}

a {
  color: inherit;
  text-decoration: none;
}

h2 {
  margin: 0;
  font: inherit;
}

fieldset {
  margin: 0;
  min-width: 0;
}

.sprite {
  position: absolute;
  width: 0;
  height: 0;
}

.ic {
  display: block;
  flex: none;
  width: 8px;
  height: 8px;
}

.ic.s5 { width: 5px; height: 5px; }
.ic.s7 { width: 7px; height: 7px; }
.ic.l9 { width: 9px; height: 9px; }
.ic.l { width: 13px; height: 13px; }

.red { fill: none; stroke: #b8504c; stroke-width: 1.5; }
.dark { fill: none; stroke: #444; stroke-width: 1.5; }

.tri {
  display: inline-block;
  flex: none;
  border: 1px solid transparent;
  border-top: 2px solid #444;
  border-bottom: 0;
}

/* title bar and tabs */
.top {
  display: flex;
  background: #3c3f3b;
}

.app-btn {
  width: 16px;
  height: 18px;
  flex-direction: column;
  background: linear-gradient(#8a8a8a, #4b4b4b);
  color: #222;
}

.app-btn svg { width: 12px; height: 12px; }
.app-btn small { font-size: 4px; line-height: 4px; }

.top-rows {
  flex: 1;
  min-width: 0;
}

.titlebar {
  height: 10px;
  display: flex;
  align-items: stretch;
  background: #fff;
}

.quick {
  width: 260px;
  display: flex;
  align-items: center;
  gap: 3px;
  padding: 0 3px;
  background: linear-gradient(#999, #5c5c5c);
}

.quick .ic { width: 7px; height: 7px; }
.quick em { color: #222; }
.sep { width: 1px; height: 8px; background: #888; }

.quick select {
  appearance: none;
  height: 8px;
  padding-left: 2px;
  line-height: 7px;
}

.quick .material { flex: 1; background: #8c8c8c; color: #666; }
.quick .look { flex: 1; background: #aaa; color: #111; }

.title {
  flex: 1;
  padding-left: 78px;
  line-height: 10px;
  color: #222;
  white-space: nowrap;
}

.search {
  width: 178px;
  display: flex;
  align-items: center;
  gap: 4px;
  padding: 0 3px 0 2px;
  background: linear-gradient(#999, #686868);
}

.search > span:first-child { width: 2px; color: #333; }
.search input { width: 74px; height: 8px; padding-left: 2px; background: #eee; }
.search input::placeholder { color: #888; }
.search .ic { width: 6px; height: 6px; }
.search .login { gap: 3px; margin-right: auto; color: #111; }

.win {
  width: 82px;
  display: flex;
  align-items: center;
  justify-content: flex-end;
  gap: 14px;
  padding-right: 12px;
}

.tabs {
  display: flex;
  height: 8px;
  padding-left: 1px;
  color: #e4e4e4;
  line-height: 8px;
  white-space: nowrap;
}

.tabs a { padding: 0 4px; }
.tabs a:first-child { padding: 0 5px; }

.tabs .active {
  padding: 0 4px;
  background: #9fd58c;
  color: #1c3316;
}

.tabs .chip {
  display: inline-block;
  width: 5px;
  height: 3px;
  background: #ddd;
}

/* ribbon */
.ribbon {
  display: flex;
  height: 39px;
  background: linear-gradient(#cde3c0, #8d8d8d);
  border-right: 4px solid #fff;
}

.panel {
  display: flex;
  flex-direction: column;
  background: #fcfdfb;
  border-right: 1px solid #c4dcb8;
}

.tools {
  flex: 1;
  display: flex;
  align-items: center;
  padding: 1px 2px;
}

.panel h2 {
  height: 7px;
  line-height: 7px;
  text-align: center;
  background: #cfe8c2;
}

.p-sketch { width: 31px; }
.p-create { width: 144px; }
.p-modify { width: 68px; }
.p-pattern { width: 26px; }
.p-constrain { width: 73px; }
.p-insert { width: 28px; }
.p-format { width: 35px; }
.p-exit { width: 24px; }
.p-exit h2 { background: #c4e6e2; }

.big {
  align-self: stretch;
  flex-direction: column;
  justify-content: flex-start;
  padding-top: 1px;
  line-height: 6px;
}

.big .ic { margin-bottom: 2px; }
.big .tri { margin-top: 2px; }
.p-sketch .big { width: 26px; }
.p-sketch .tools, .p-exit .tools { padding: 1px; justify-content: center; }
.p-create .big { width: 17px; }
.p-create .project { width: 42px; border-left: 1px solid #ddd; margin-left: auto; }
.project .ic.l { width: 11px; }

.small-col {
  display: flex;
  flex-direction: column;
  align-items: flex-start;
}

.small-col button, .cols button {
  height: 10px;
  gap: 3px;
}

.p-create .small-col { padding-left: 2px; }
.p-pattern .small-col { padding-left: 2px; }
.small-col .tri { margin-left: 1px; }

.letter {
  width: 8px;
  font-size: 8px;
  color: #222;
}

.cols {
  display: grid;
  grid-template-columns: repeat(3, 22px);
  align-content: center;
}

.cols button { justify-content: flex-start; gap: 2px; }

.p-constrain .tools { gap: 3px; padding-right: 1px; }
.quad { display: grid; grid-template-columns: repeat(4, 10px); margin-left: auto; }
.pair { display: flex; }

.boxed button {
  width: 10px;
  height: 10px;
  border: 1px solid #e0dfdd;
  background: #f6f5f4;
}

.p-insert .small-col button { gap: 1px; }
.p-format .small-col button { gap: 1px; }

/* model browser */
main {
  flex: 1;
  min-height: 0;
  display: flex;
}

.browser {
  width: 102px;
  display: flex;
  flex-direction: column;
  padding: 0 1px 1px;
  border-right: 1px solid #999;
}

.grip {
  height: 7px;
  display: flex;
  align-items: center;
  gap: 2px;
}

.grip i {
  flex: 1;
  height: 3px;
  border: 1px solid #ccc;
  border-width: 1px 0;
}

.browser-head {
  height: 8px;
  display: flex;
  align-items: center;
  justify-content: space-between;
  padding: 0 1px 0 4px;
  background: #aaa;
  color: #fff;
}

.browser-tools {
  height: 12px;
  display: flex;
  align-items: center;
  gap: 3px;
  padding-left: 1px;
}

.browser-tools i {
  width: 1px;
  height: 8px;
  background: #aaa;
}

.tree {
  flex: 1;
  margin: 0;
  padding: 0;
  list-style: none;
  background: #fff;
  border: 1px solid #aaa;
}

.tree li {
  height: 8px;
  display: flex;
  align-items: center;
  gap: 2px;
  padding-left: 1px;
}

.tree .ic { width: 7px; height: 7px; }
.tree .shade { background: #f1f1f1; }

.plus {
  width: 5px;
  height: 5px;
  margin-right: 2px;
  border: 1px solid #aaa;
  background:
    linear-gradient(#555, #555) center / 3px 1px no-repeat,
    linear-gradient(#555, #555) center / 1px 3px no-repeat #fff;
}

.dash {
  width: 5px;
  height: 1px;
  margin-right: 2px;
  background: #bbb;
}

/* modelling area */
.work {
  flex: 1;
  min-width: 0;
  display: flex;
  flex-direction: column;
}

.canvas {
  flex: 1;
  position: relative;
  background:
    linear-gradient(transparent 58%, rgba(160, 165, 177, .8) 76%, #c6c7ca 100%),
    radial-gradient(ellipse 62% 100% at 50% 62%, #a0abc6 0%, #939fba 35%, #7985a0 60%, #59657b 80%, #414c5f 100%);
}

.scene {
  position: absolute;
  inset: 0;
  width: 100%;
  height: 100%;
}

.axis { font-size: 5px; }

.doc-win {
  position: absolute;
  top: 3px;
  right: 2px;
  display: flex;
  gap: 3px;
  color: #fff;
}

.navbar {
  position: absolute;
  top: 61px;
  right: 1px;
  width: 13px;
  height: 95px;
  display: flex;
  flex-direction: column;
  align-items: center;
  justify-content: space-between;
  padding: 1px 0;
  background: #858990;
  border: 1px solid #94979d;
}

.navbar .ic { width: 7px; height: 7px; opacity: .8; }
.navbar .ic.l9 { width: 9px; height: 9px; }
.navbar .line { width: 100%; border-top: 1px solid #70747b; padding-top: 3px; }

.navbar .dot {
  align-self: flex-end;
  width: 3px;
  height: 3px;
  margin-right: 1px;
  border: 1px solid #b4b6ba;
  border-radius: 50%;
}

.mini {
  position: absolute;
  left: 370px;
  top: 32px;
  display: flex;
  flex-direction: column;
  gap: 3px;
}

.mini-row { display: flex; gap: 3px; }
.mini-row.first { margin-left: -5px; gap: 2px; }

.handle {
  width: 3px;
  border: 1px solid #bbb;
  background: #ddd;
}

.pill {
  display: flex;
  height: 9px;
  overflow: hidden;
  border: 1px solid #bbb;
  border-radius: 5px;
  background: #ddd;
}

.pill button { padding: 0 2px; gap: 1px; color: #222; }
.pill button + button { border-left: 1px solid #bbb; }
.pill .ic { width: 7px; height: 7px; }
.pill.wide button { padding: 0 2px; gap: 2px; }
.pill .ok { width: 12px; }

.pill input {
  width: 39px;
  border: 1px solid #6aa9dc;
  background: linear-gradient(#4a90d8, #4a90d8) left / 6px 100% no-repeat #fff;
  color: #cfe3f7;
}

/* extrude dialog */
.dialog {
  position: absolute;
  left: 3px;
  top: 0;
  width: 133px;
  background: #fff;
  border: 1px solid #b5b8bd;
  border-top: 0;
  box-shadow: 1px 2px 4px rgba(20, 25, 40, .6);
}

.dialog-title {
  height: 13px;
  display: flex;
  align-items: center;
  justify-content: space-between;
  padding: 0 3px;
}

.dialog-tabs {
  height: 10px;
  display: flex;
  align-items: flex-end;
  background: #f0f0f0;
  line-height: 9px;
}

.dialog-tabs a {
  padding: 0 5px;
  border: 1px solid #ddd;
  border-bottom: 0;
}

.dialog-tabs .on { background: #fff; border-color: #fff; }

.dialog-body {
  display: flex;
  gap: 5px;
  height: 68px;
  padding: 4px 3px 0;
}

.col-a { width: 43px; }

.field {
  display: flex;
  align-items: center;
  gap: 5px;
  height: 14px;
}

.sq {
  width: 12px;
  height: 11px;
  border: 1px solid #c4c4c4;
  background: #e2e2e2;
}

.sq.sel {
  border-color: #5a9cd0;
  background: #c4def2;
}

.sq.off { background: #d8ccd4; }

.dialog fieldset {
  border: 1px solid #ddd;
  padding: 0 3px;
}

.dialog legend {
  padding: 0 1px;
  line-height: 6px;
}

.dialog .out {
  width: 33px;
  margin-top: 3px;
  padding-bottom: 2px;
  white-space: nowrap;
}

.col-b {
  width: 16px;
  height: 54px;
  display: flex;
  flex-direction: column;
  justify-content: space-between;
  align-items: center;
  padding: 2px 0 1px;
  border: 1px solid #ddd;
}

.col-c { flex: 1; }

.drop {
  width: 45px;
  position: relative;
}

.drop select {
  appearance: none;
  display: block;
  width: 100%;
  height: 9px;
  padding-left: 2px;
  border: 1px solid #b4b4b4;
  background: #e4e4e4;
}

.drop::after {
  content: "";
  position: absolute;
  right: 3px;
  top: 2px;
  width: 3px;
  height: 3px;
  border: 1px solid #555;
  border-width: 0 1px 1px 0;
  transform: rotate(45deg);
}

.num {
  width: 45px;
  height: 9px;
  display: flex;
  margin: 3px 0;
  border: 1px solid #aaa;
}

.num input { flex: 1; width: 30px; padding-left: 1px; }
.num span { width: 5px; text-align: center; border-left: 1px solid #ddd; }

.dirs {
  display: flex;
  gap: 1px;
  padding-bottom: 3px;
}

.dialog input[type="checkbox"] {
  appearance: none;
  display: grid;
  place-items: center;
  width: 7px;
  height: 7px;
  border: 1px solid #666;
  background: #fff;
}

.dialog .preview input:checked::after {
  content: "✓";
  color: #222;
}

.match {
  display: flex;
  align-items: center;
  gap: 2px;
  margin-top: 5px;
  color: #999;
}

.dialog .match input { width: 6px; height: 6px; border-color: #ccc; }

.dialog-foot {
  height: 13px;
  display: flex;
  align-items: center;
  gap: 2px;
  padding: 0 3px 0 4px;
  background: #f0f0f0;
}

.preview {
  display: flex;
  align-items: center;
  gap: 2px;
  margin: 0 auto;
  padding: 1px;
  border: 1px solid #ddd;
}

.glasses { width: 14px; height: 7px; }

.act {
  width: 30px;
  height: 9px;
  border: 1px solid #bbb;
  background: #e2e2e2;
}

.act.main { border-color: #1979ca; }

.dialog-fold {
  height: 7px;
  border-top: 1px solid #ccc;
  background: #f0f0f0;
  color: #000;
  text-align: center;
}

/* document tabs */
.docs {
  height: 9px;
  display: flex;
  align-items: stretch;
  border-top: 1px solid #eee;
  background: linear-gradient(#d4d4d4, #bbb);
  line-height: 8px;
}

.docs button { width: 8px; border: 1px solid #999; }

.docs a {
  padding: 0 3px;
  border-right: 1px solid #999;
  background: #c8c8c8;
  color: #111;
}

.docs .on { background: #fff; }
.docs .on span { color: #888; }

.edge {
  width: 3px;
  background: linear-gradient(#fff 80%, #2a5aa8 80%, #2a5aa8 82%, #1b1d22 82%);
}

/* status bar */
.status {
  height: 11px;
  display: flex;
  align-items: center;
  background: linear-gradient(#fff, #b4b4b4);
  color: #222;
}

.hint { width: 189px; }
.status-tools { display: flex; align-items: center; gap: 3px; margin-right: auto; }
.status-tools .ic { width: 7px; height: 7px; }
.coords { margin-right: 9px; }
.full { margin-right: 5px; }
.n { width: 15px; }

.taskbar {
  height: 3px;
  display: flex;
  background: #0c0c0c;
}

.taskbar i { width: 143px; margin-left: 20px; background: #eee; }
.taskbar b { width: 20px; margin-left: 143px; background: #333; }

/* site mark */
.watermark {
  position: absolute;
  right: 4px;
  bottom: 5px;
  display: flex;
  align-items: flex-start;
  gap: 2px;
  color: #5db1dc;
}

.watermark svg { width: 46px; height: 50px; }

.watermark strong, .watermark small {
  display: block;
  -webkit-text-stroke: 2px #f4f9fc;
  paint-order: stroke fill;
  white-space: nowrap;
}

.watermark strong {
  font-size: 24px;
  line-height: 32px;
}

.watermark small {
  font: bold 10px/10px "DejaVu Sans", sans-serif;
}
```
